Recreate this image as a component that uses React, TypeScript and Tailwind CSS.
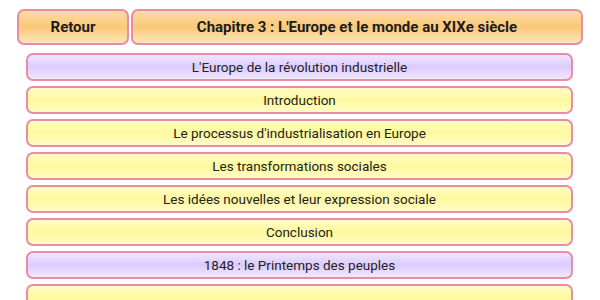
const chapters = [
  { label: "L'Europe de la révolution industrielle", kind: 'part' },
  { label: 'Introduction', kind: 'item' },
  { label: "Le processus d'industrialisation en Europe", kind: 'item' },
  { label: 'Les transformations sociales', kind: 'item' },
  { label: 'Les idées nouvelles et leur expression sociale', kind: 'item' },
  { label: 'Conclusion', kind: 'item' },
  { label: '1848 : le Printemps des peuples', kind: 'part' },
  { label: '', kind: 'item' },
];

const partCls =
  'bg-linear-to-b from-[#efe6ff] via-[#dccbff] to-[#f1e9ff]';
const itemCls =
  'bg-linear-to-b from-[#fffcc4] via-[#fff99c] to-[#fffcc6]';

export default function App() {
  return (
    <div
      className="w-[600px] h-[300px] overflow-hidden bg-white text-[#1c1c1c]"
      style={{ fontFamily: 'Roboto, "Liberation Sans", sans-serif' }}
    >
      {/* Header */}
      <div className="flex gap-[2px] px-[17px] pt-[9px]">
        <button className="w-[112px] h-[36px] shrink-0 rounded-[7px] border-2 border-[#ea8ca3] bg-linear-to-b from-[#fddba6] via-[#fbc878] to-[#fde4ba] text-[15px] font-bold">
          Retour
        </button>
        <div className="flex-1 h-[36px] rounded-[7px] border-2 border-[#ea8ca3] bg-linear-to-b from-[#fddba6] via-[#fbc878] to-[#fde4ba] flex items-center justify-center text-[15px] font-bold">
          Chapitre 3 : L'Europe et le monde au XIXe siècle
        </div>
      </div>

      {/* Chapter list */}
      <div className="flex flex-col gap-[5px] pl-[26px] pr-[27px] pt-[8px]">
        {chapters.map((c, i) => (
          <div
            key={i}
            className={`h-[28px] shrink-0 rounded-[7px] border-2 border-[#ea8ca3] flex items-center justify-center text-[13.5px] text-[#222] ${
              c.kind === 'part' ? partCls : itemCls
            }`}
          >
            {c.label}
          </div>
        ))}
      </div>
    </div>
  );
}
